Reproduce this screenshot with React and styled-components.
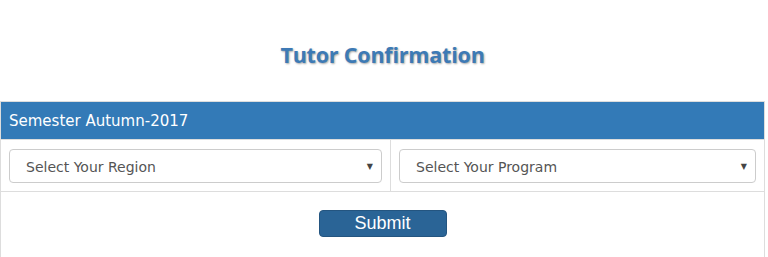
import React from "react";
import styled, { createGlobalStyle } from "styled-components";

const Global = createGlobalStyle`
  html, body { margin: 0; padding: 0; background: #fff; }
  body { font-family: "DejaVu Sans", Verdana, sans-serif; }
`;

const Page = styled.div`
  width: 765px;
`;

const Title = styled.h2`
  margin: 0;
  padding-top: 40px;
  height: 62px;
  box-sizing: border-box;
  text-align: center;
  font-family: "Open Sans", "DejaVu Sans", sans-serif;
  font-weight: 700;
  font-size: 21.5px;
  letter-spacing: -0.2px;
  line-height: 30px;
  color: #3d7ab5;
  text-shadow: 1px 1px 2px rgba(0, 0, 0, 0.35);
`;

const Table = styled.div`
  border: 1px solid #ddd;
  border-bottom: none;
  margin-top: 39px;
`;

const Header = styled.div`
  background: #337ab7;
  color: #fff;
  height: 37px;
  display: flex;
  align-items: center;
  padding: 0 8px;
  font-size: 15px;
  border-bottom: 1px solid #ddd;
`;

const SelectRow = styled.div`
  display: grid;
  grid-template-columns: 389px 1fr;
  border-bottom: 1px solid #ddd;
`;

const Cell = styled.div`
  padding: 9px 8px 8px;
  & + & { border-left: 1px solid #ddd; }
`;

const SelectBox = styled.div`
  height: 34px;
  box-sizing: border-box;
  border: 1px solid #ccc;
  border-radius: 4px;
  display: flex;
  align-items: center;
  justify-content: space-between;
  padding: 2px 8px 0 16px;
  font-size: 14px;
  color: #555;
  background: #fff;
`;

const Arrow = styled.span`
  font-size: 8px;
  color: #444;
  margin-top: -2px;
`;

const ActionRow = styled.div`
  display: flex;
  justify-content: center;
  padding: 18px 0 30px;
`;

const SubmitButton = styled.button`
  width: 128px;
  height: 27px;
  background: #2a6496;
  border: 1px solid #245580;
  border-radius: 4px;
  color: #fff;
  font-family: "Liberation Sans", Arial, sans-serif;
  font-size: 18px;
  padding: 0;
  line-height: 25px;
`;

export default function App() {
  return (
    <Page>
      <Global />
      <Title>Tutor Confirmation</Title>
      <Table>
        <Header>Semester Autumn-2017</Header>
        <SelectRow>
          <Cell>
            <SelectBox>
              Select Your Region
              <Arrow>▼</Arrow>
            </SelectBox>
          </Cell>
          <Cell>
            <SelectBox>
              Select Your Program
              <Arrow>▼</Arrow>
            </SelectBox>
          </Cell>
        </SelectRow>
        <ActionRow>
          <SubmitButton>Submit</SubmitButton>
        </ActionRow>
      </Table>
    </Page>
  );
}
